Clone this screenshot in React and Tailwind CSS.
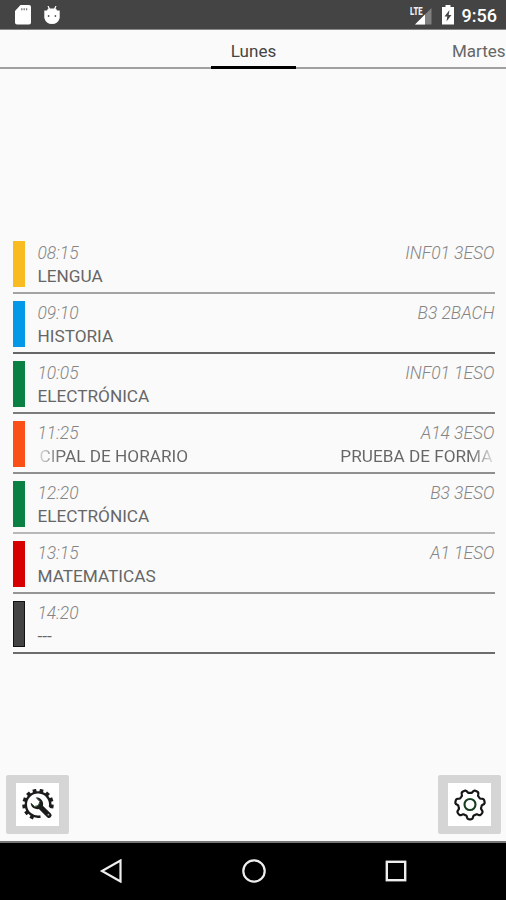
import clsx from 'clsx';

const lessons = [
  { time: '08:15', subject: 'LENGUA', room: 'INF01 3ESO', color: 'bg-[#f9bc20]', line: 'bg-[#a3a3a3]' },
  { time: '09:10', subject: 'HISTORIA', room: 'B3 2BACH', color: 'bg-[#0398e8]', line: 'bg-[#666666]' },
  { time: '10:05', subject: 'ELECTRÓNICA', room: 'INF01 1ESO', color: 'bg-[#0b8043]', line: 'bg-[#7c7c7c]' },
  { time: '11:25', subject: 'CIPAL DE HORARIO', note: 'PRUEBA DE FORMA', room: 'A14 3ESO', color: 'bg-[#fa5017]', line: 'bg-[#8f8f8f]' },
  { time: '12:20', subject: 'ELECTRÓNICA', room: 'B3 3ESO', color: 'bg-[#0b8043]', line: 'bg-[#b8b8b8]' },
  { time: '13:15', subject: 'MATEMATICAS', room: 'A1 1ESO', color: 'bg-[#d60000]', line: 'bg-[#959595]' },
  { time: '14:20', subject: '---', room: '', color: 'bg-[#434343] border border-[#111]', line: 'bg-[#6c6c6c]' }
];

// Closed gear outline with rounded teeth, first tooth pointing down
const gearOutline = (teeth, inner, outer) => {
  const points = [];
  const steps = teeth * 24;
  for (let i = 0; i < steps; i++) {
    const angle = (i / steps) * Math.PI * 2;
    const wave = Math.tanh(2.2 * Math.cos(angle * teeth)) / Math.tanh(2.2);
    const r = (inner + outer) / 2 + (wave * (outer - inner)) / 2;
    points.push(`${(r * Math.sin(angle)).toFixed(2)} ${(r * Math.cos(angle)).toFixed(2)}`);
  }
  return `M${points.join('L')}Z`;
};

const GearIcon = () => (
  <svg viewBox="-16 -15.5 32 32" className="h-8 w-8" fill="none">
    <path d={gearOutline(7, 11.6, 14.8)} stroke="#161616" strokeWidth="2.2" strokeLinejoin="round" />
    <circle r="5.5" stroke="#173d20" strokeWidth="2.1" />
  </svg>
);

const GearWrenchIcon = () => (
  <svg viewBox="-16 -15.5 32 32" className="h-8 w-8" fill="none">
    <path d="M12 2.5A12.2 12.2 0 1 0 2.5 12" stroke="#1c1c1c" strokeWidth="2.4" />
    {[8, -20, -48, -76, -104, -132, -160, -188, -216, -244].map(angle => (
      <rect key={angle} x="12" y="-1.9" width="3.7" height="3.8" fill="#1c1c1c" transform={`rotate(${angle})`} />
    ))}
    <path d="M2 2L11 10.8" stroke="#1c1c1c" strokeWidth="5.2" strokeLinecap="round" />
    <path d="M-2 -7.2A6.8 6.8 0 0 1 4.6 2.2A6.8 6.8 0 0 1 -7.4 -1.6L-3.4 2.2L.6 1.2L2 -3Z" fill="#1c1c1c" />
    <path d="M-1.6 -6.6L1.8 -3L.6 1L-3.4 2L-7 -1.2" stroke="#24502d" strokeWidth="1" />
    <circle cx="10.4" cy="10.2" r=".9" fill="#aaa" />
  </svg>
);

const StatusBar = () => (
  <div className="flex h-[30px] items-center border-b border-[#888] bg-[#444444] pr-[9px] pl-[14px] text-white">
    <svg viewBox="0 0 18 20" className="mt-px h-5 w-[18px]">
      <path d="M6.5 0H15Q17 0 17 2V17.5Q17 19.5 15 19.5H3Q1 19.5 1 17.5V6Z" fill="#fff" />
      <path d="M7.8 3.2V5.2M10.2 3.2V5.2M12.6 3.2V5.2" stroke="#777" strokeWidth="1.3" />
    </svg>
    <svg viewBox="0 0 16 18" className="ml-3 h-[18px] w-4">
      <path d="M4 0L5.5 3M12 0L10.5 3" stroke="#fff" strokeWidth="1.2" />
      <path d="M4 2.5H12L13 4.5H15.7V12Q14 18 8 18Q2 18 .3 12V4.5H3Z" fill="#fff" />
      <circle cx="4.6" cy="10" r=".9" fill="#555" />
      <circle cx="11.4" cy="10" r=".9" fill="#555" />
    </svg>
    <svg viewBox="0 0 24 20" className="ml-auto h-5 w-6">
      <path d="M21.5 3V19.5H5Z" fill="#808080" />
      <path d="M15 9.5V19.5H5Z" fill="#fff" />
      <text x="0" y="10" fontSize="10" fontWeight="900" textLength="12.5" lengthAdjust="spacingAndGlyphs" fill="#eee">LTE</text>
    </svg>
    <svg viewBox="0 0 12 20" className="ml-2 h-5 w-3">
      <path d="M3.5 0H8.5V2H12V19.5H0V2H3.5Z" fill="#fff" />
      <path d="M7.5 5L2.5 11.5H5.3L4.5 16.5L9.5 10H6.7Z" fill="#444" />
    </svg>
    <span className="mt-[2px] ml-2 text-[18px] leading-none font-medium">9:56</span>
  </div>
);

const Tabs = () => (
  <div className="grid h-[39px] grid-cols-[211px_85px_210px] grid-rows-[39px] overflow-hidden text-[17px] leading-[42px] text-[#666]">
    <div className="border-b-2 border-[#a0a0a0]" />
    <div className="border-b-[3px] border-black text-center text-[#444]">Lunes</div>
    <div className="overflow-hidden border-b-2 border-[#a0a0a0] pl-[156px] whitespace-nowrap">Martes</div>
  </div>
);

const Lesson = ({ lesson }) => (
  <div className="h-[60px]">
    <div className="flex h-[46px]">
      <div className={clsx('w-[12px] shrink-0', lesson.color)} />
      <div className="min-w-0 flex-1 pl-[12.5px]">
        <div className="flex h-[23px] justify-between text-[17.4px] leading-[25px] font-light text-[#858585] italic">
          <span>{lesson.time}</span>
          <span>{lesson.room}</span>
        </div>
        <div className="flex justify-between text-[17.2px] leading-[24px] text-[#666]">
          {lesson.note ? (
            <>
              <span className="bg-linear-to-r from-[#ddd] to-[#666] to-[24px] bg-clip-text pl-[2px] text-transparent">{lesson.subject}</span>
              <span className="mr-[2px] bg-linear-to-l from-[#ddd] to-[#666] to-[24px] bg-clip-text text-transparent">{lesson.note}</span>
            </>
          ) : (
            <span>{lesson.subject}</span>
          )}
        </div>
      </div>
    </div>
    <div className={clsx('mt-[5px] h-[2px]', lesson.line)} />
  </div>
);

const IconButton = ({ label, children }) => (
  <button aria-label={label} className="flex h-[59px] w-[63px] items-center justify-center rounded-xs bg-[#d5d5d5]">
    <span className="flex h-[43px] w-[43px] items-center justify-center bg-white">{children}</span>
  </button>
);

const NavBar = () => (
  <div className="grid h-[59px] grid-cols-[112px_284px_110px] items-center border-t-2 border-[#777] bg-black pb-px">
    <svg viewBox="0 0 24 24" className="-mr-[11px] h-6 w-6 justify-self-end" fill="none" stroke="#eee" strokeWidth="2.2">
      <path d="M21.5 1.5V22.5L3 12Z" />
    </svg>
    <svg viewBox="0 0 24 24" className="h-6 w-6 justify-self-center" fill="none" stroke="#eee" strokeWidth="2.2">
      <circle cx="12" cy="12" r="10.7" />
    </svg>
    <svg viewBox="0 0 22 22" className="-ml-[11px] h-[22px] w-[22px]" fill="none" stroke="#eee" strokeWidth="2.4">
      <rect x="1.8" y="1.8" width="18.4" height="18.4" />
    </svg>
  </div>
);

const App = () => {
  return (
    <div className="flex h-[900px] w-[506px] flex-col overflow-hidden bg-[#fafafa] font-[Roboto,sans-serif]">
      <StatusBar />
      <Tabs />
      <div className="mt-[172px] pr-[11.5px] pl-[13px]">
        {lessons.map(lesson => (
          <Lesson key={lesson.time} lesson={lesson} />
        ))}
      </div>
      <div className="mt-auto mb-[7px] flex justify-between pr-[5px] pl-[6px]">
        <IconButton label="Herramientas"><GearWrenchIcon /></IconButton>
        <IconButton label="Ajustes"><GearIcon /></IconButton>
      </div>
      <NavBar />
    </div>
  );
};

export default App;
